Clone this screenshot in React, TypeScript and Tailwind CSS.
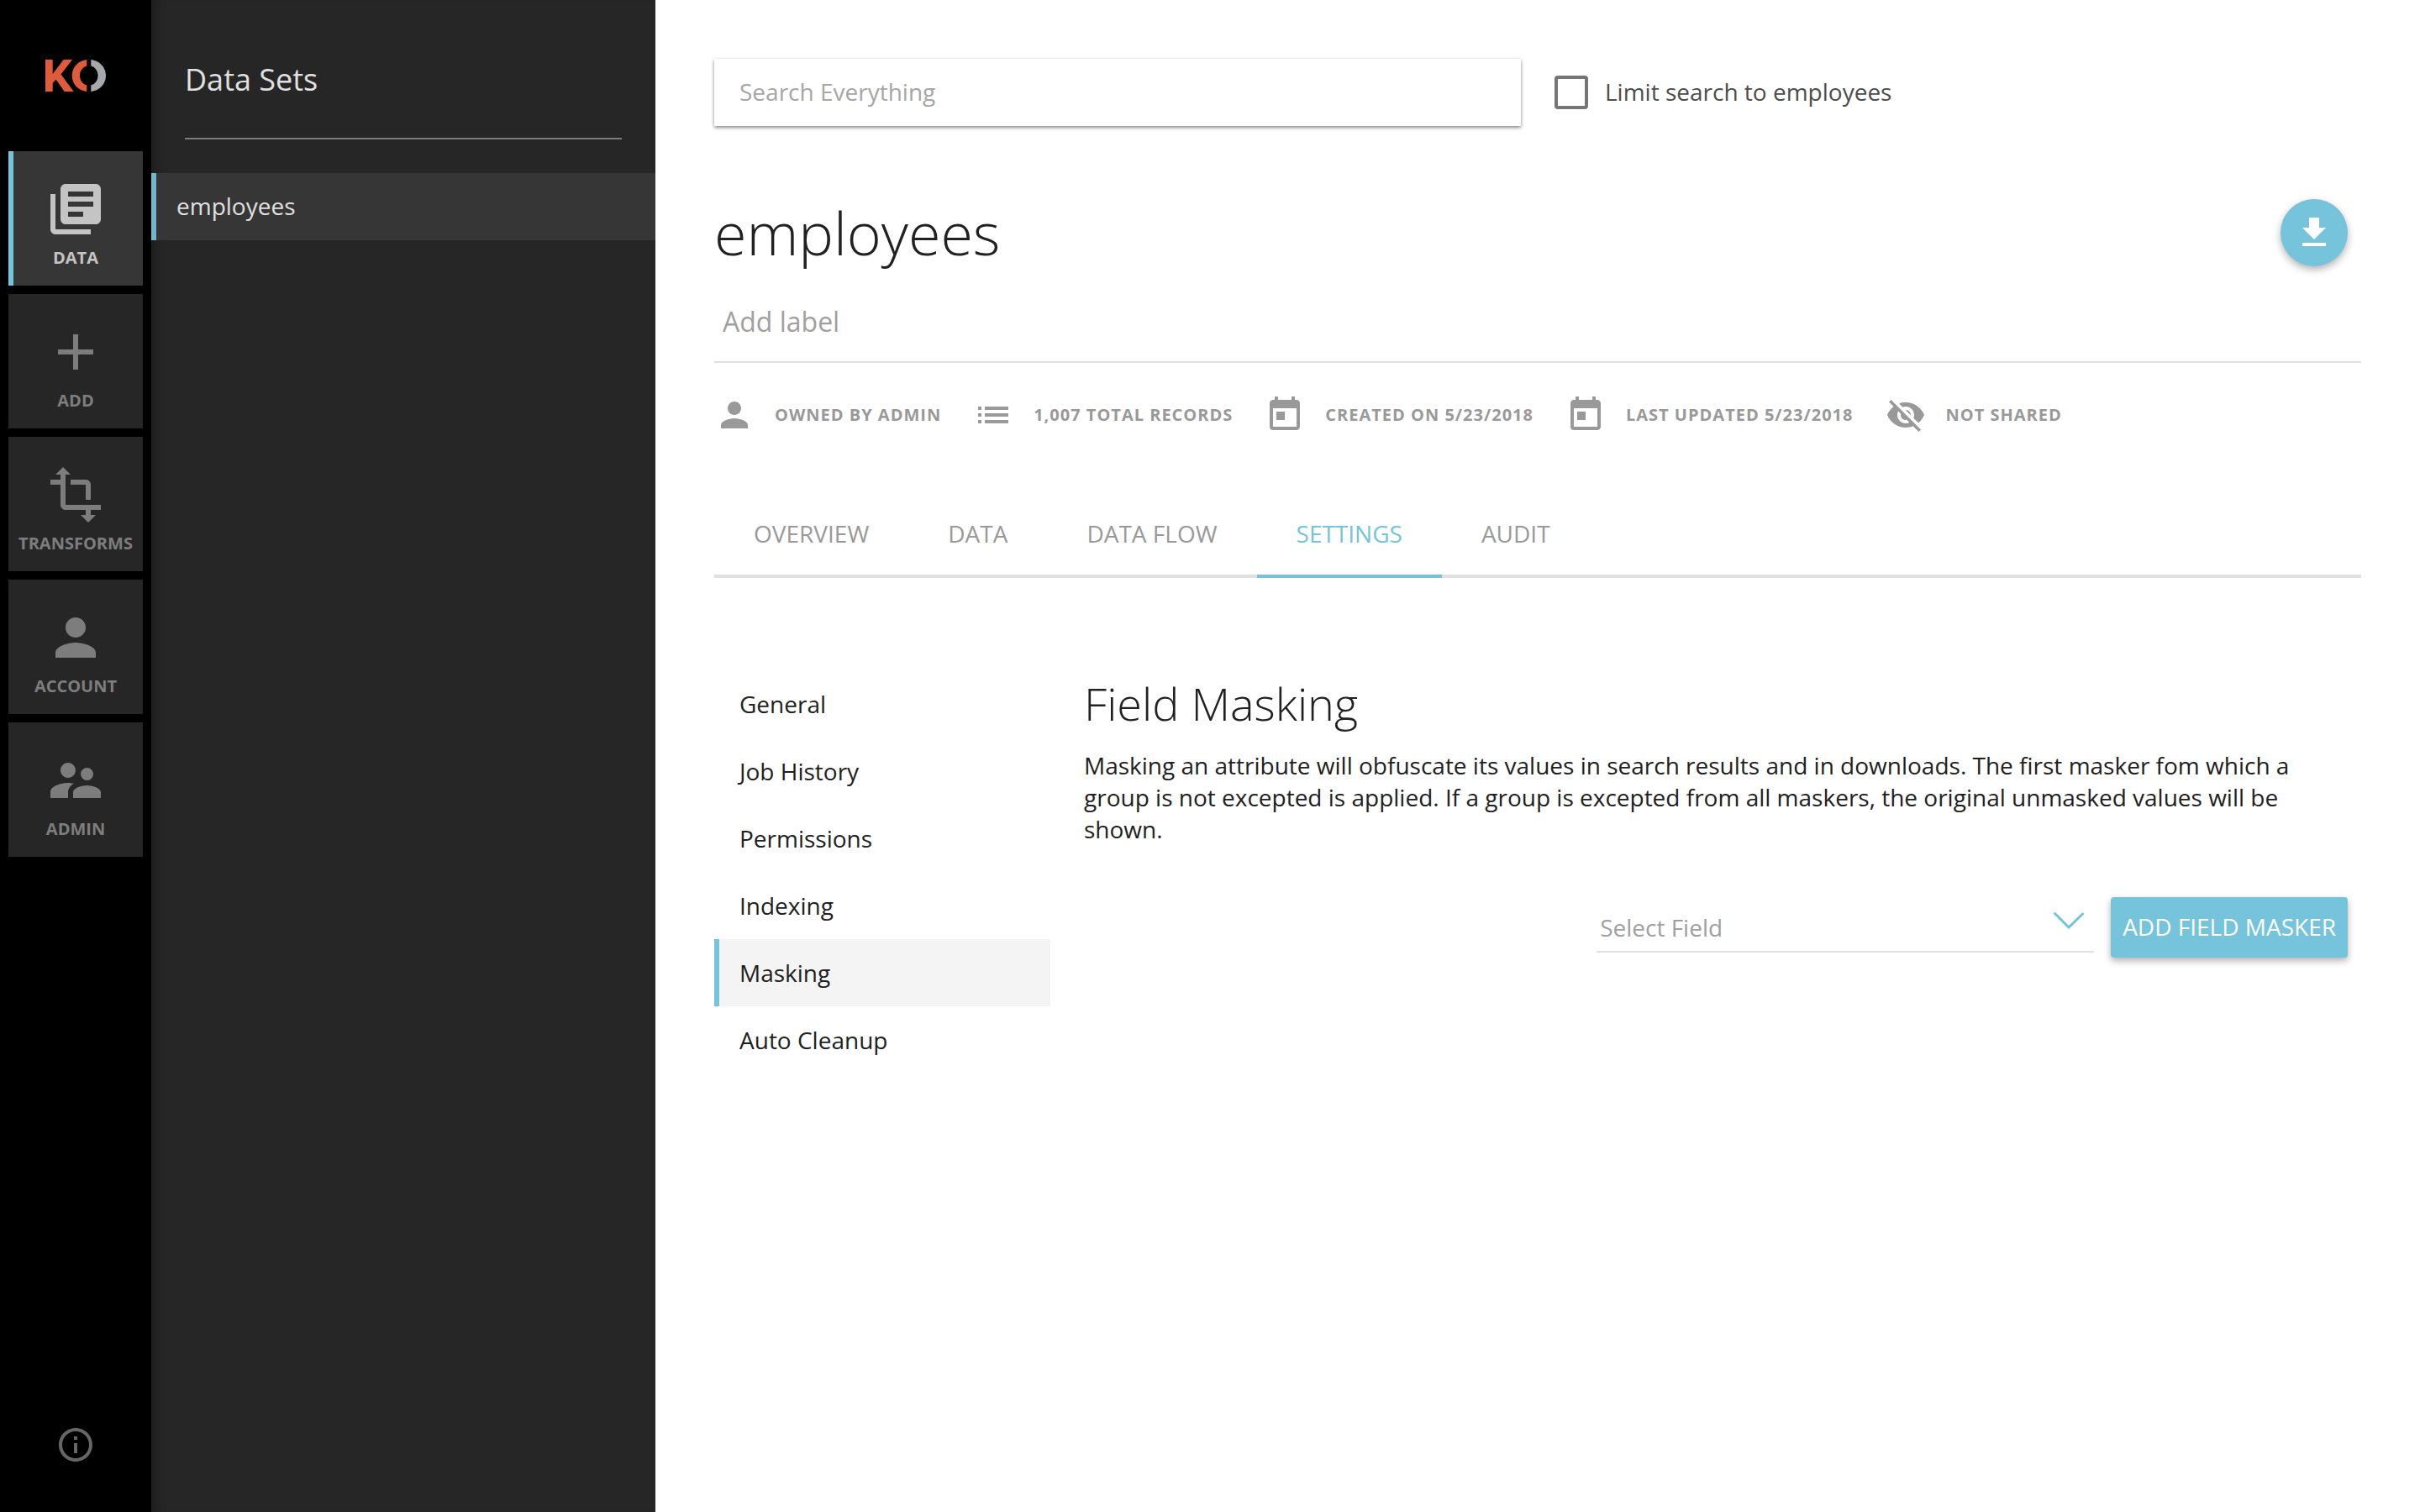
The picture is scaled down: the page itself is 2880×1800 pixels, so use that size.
import type { ReactNode } from "react";
import {
  MdLibraryBooks,
  MdAdd,
  MdTransform,
  MdPerson,
  MdSupervisorAccount,
  MdInfoOutline,
  MdList,
  MdToday,
  MdVisibilityOff,
  MdFileDownload,
} from "react-icons/md";

function Logo() {
  return (
    <svg viewBox="0 0 72 38" className="h-[38px] w-[72px]" role="img" aria-label="KO">
      <path fill="#e05b3b" d="M0 0h8.700v17L21.700 0H32L18.500 17.500L33.700 38H22.700L12.500 23.500L8.700 28v10H0z" />
      <path fill="#e05b3b" d="M49.300 0v7.500C44.500 8.800 41 13.500 41 19s3.500 10.200 8.300 11.500V38C39.300 37 31.700 29 31.700 19S39.300 1 49.300 0z" />
      <path fill="#a7a8ab" d="M54.300 0v7.500C59.100 8.800 62.600 13.500 62.600 19s-3.500 10.200-8.300 11.500V38C64.300 37 72 29 72 19S64.300 1 54.300 0z" />
    </svg>
  );
}

const navItems = [
  { label: "DATA", icon: MdLibraryBooks, active: true },
  { label: "ADD", icon: MdAdd, active: false },
  { label: "TRANSFORMS", icon: MdTransform, active: false },
  { label: "ACCOUNT", icon: MdPerson, active: false },
  { label: "ADMIN", icon: MdSupervisorAccount, active: false },
];

function NavRail() {
  return (
    <nav aria-label="Main" className="flex w-[180px] shrink-0 flex-col bg-black px-2.5">
      <a href="#home" className="flex h-[180px] items-center justify-center">
        <Logo />
      </a>
      <div className="flex flex-col gap-2.5">
        {navItems.map(({ label, icon: Icon, active }) => (
          <a
            key={label}
            href={"#" + label.toLowerCase()}
            className={
              active
                ? "flex h-40 flex-col items-center justify-center gap-2 bg-[#363636] pt-3.5 text-[#c4c4c4] shadow-[inset_6px_0_0_#76c3dc]"
                : "flex h-40 flex-col items-center justify-center gap-2 bg-[#262626] pt-3.5 text-[#7d7d7d]"
            }
          >
            <Icon className="size-[72px]" />
            <span className="text-[20px] leading-7 font-bold">{label}</span>
          </a>
        ))}
      </div>
      <button aria-label="About" className="mt-auto mb-14 self-center text-[#666]">
        <MdInfoOutline className="size-12" />
      </button>
    </nav>
  );
}

function DataSets() {
  return (
    <aside className="w-[600px] shrink-0 bg-[#262626] text-[#e0e0e0] shadow-[inset_16px_0_16px_-12px_rgba(0,0,0,0.3)]">
      <div className="px-10 pt-[70px]">
        <h2 className="border-b-2 border-[#7d7d7d] pb-11 text-[36px] leading-[50px]">Data Sets</h2>
      </div>
      <a
        href="#employees"
        className="mt-10 flex h-20 items-center border-l-[6px] border-[#70b6cc] bg-[#363636] pb-0.5 pl-6 text-[28px]"
      >
        employees
      </a>
    </aside>
  );
}

function Meta({ icon, children }: { icon: ReactNode; children: ReactNode }) {
  return (
    <li className="flex items-center gap-6">
      {icon}
      {children}
    </li>
  );
}

const tabs = ["OVERVIEW", "DATA", "DATA FLOW", "SETTINGS", "AUDIT"];
const sections = ["General", "Job History", "Permissions", "Indexing", "Masking", "Auto Cleanup"];

export default function App() {
  return (
    <div className="flex min-h-screen bg-white font-['Open_Sans',sans-serif] text-[#212121]">
      <NavRail />
      <DataSets />
      <main className="min-w-0 flex-1 px-[70px] pt-[70px]">
        <div className="flex items-center gap-10">
          <input
            type="search"
            aria-label="Search Everything"
            placeholder="Search Everything"
            className="h-20 w-[960px] bg-white px-[30px] pb-0.5 text-[28px] shadow-[0_2px_4px_rgba(0,0,0,0.45),0_0_4px_rgba(0,0,0,0.06)] placeholder:text-[#a6a6a6]"
          />
          <label className="flex items-center gap-5 text-[28px] text-[#4d4d4d]">
            <input type="checkbox" className="size-10 appearance-none rounded-sm border-4 border-[#757575]" />
            <span className="pb-0.5">Limit search to employees</span>
          </label>
        </div>

        <header className="mt-[78px] border-b-2 border-[#e0e0e0] pb-[22px]">
          <div className="flex items-center justify-between pr-4">
            <h1 className="text-[70px] leading-[98px] font-light">employees</h1>
            <button
              aria-label="Download"
              className="flex size-20 items-center justify-center rounded-full bg-[#76c3dc] text-white shadow-[0_4px_10px_rgba(0,0,0,0.3)]"
            >
              <MdFileDownload className="size-12" />
            </button>
          </div>
          <input
            aria-label="Add label"
            placeholder="Add label"
            className="mt-[30px] block h-[52px] w-full px-2.5 text-[32px] placeholder:text-[#a0a0a0]"
          />
        </header>

        <ul className="mt-[38px] flex gap-[38px] text-[20px] font-bold tracking-wider text-[#999]">
          <Meta icon={<MdPerson className="size-12" />}>OWNED BY ADMIN</Meta>
          <Meta icon={<MdList className="size-12" />}>1,007 TOTAL RECORDS</Meta>
          <Meta icon={<MdToday className="size-12" />}>CREATED ON 5/23/2018</Meta>
          <Meta icon={<MdToday className="size-12" />}>LAST UPDATED 5/23/2018</Meta>
          <Meta icon={<MdVisibilityOff className="size-12" />}>NOT SHARED</Meta>
        </ul>

        <div role="tablist" className="mt-20 flex text-[28px] leading-[74px] shadow-[inset_0_-4px_0_#e0e0e0]">
          {tabs.map((tab) => (
            <button
              key={tab}
              role="tab"
              aria-selected={tab === "SETTINGS"}
              className={
                tab === "SETTINGS"
                  ? "border-b-4 border-[#76c3dc] px-[47px] pb-3 text-[#76c3dc]"
                  : "border-b-4 border-transparent px-[47px] pb-3 text-[#999]"
              }
            >
              {tab}
            </button>
          ))}
        </div>

        <div className="mt-[110px] flex gap-10 text-[28px]">
          <nav aria-label="Settings" className="flex w-[400px] shrink-0 flex-col">
            {sections.map((section) => (
              <a
                key={section}
                href={"#" + section}
                className={
                  section === "Masking"
                    ? "flex h-20 items-center border-l-[6px] border-[#76c3dc] bg-[#f4f4f4] pl-6"
                    : "flex h-20 items-center border-l-[6px] border-transparent pl-6"
                }
              >
                {section}
              </a>
            ))}
          </nav>
          <section className="min-w-0 flex-1 pr-4">
            <h2 className="text-[54px] leading-[78px] font-light">Field Masking</h2>
            <p className="mt-4 leading-[38px]">
              Masking an attribute will obfuscate its values in search results and in downloads. The first masker fom
              which a group is not excepted is applied. If a group is excepted from all maskers, the original unmasked
              values will be shown.
            </p>
            <div className="mt-[62px] flex justify-end gap-5">
              <div className="relative h-[66px] w-[592px]">
                <select
                  aria-label="Select Field"
                  className="h-full w-full appearance-none border-b-2 border-[#e0e0e0] px-1 pt-2 text-[#a0a0a0]"
                >
                  <option>Select Field</option>
                </select>
                <svg
                  viewBox="0 0 36 20"
                  className="pointer-events-none absolute top-[18px] right-3 h-5 w-9 fill-none stroke-[#76c3dc] stroke-3"
                >
                  <path strokeLinecap="round" d="M1.500 1.500L18 18L34.500 2" />
                </svg>
              </div>
              <button className="h-[72px] rounded-sm bg-[#76c3dc] px-3.5 pb-0.5 text-white shadow-[0_4px_8px_rgba(0,0,0,0.3)]">
                ADD FIELD MASKER
              </button>
            </div>
          </section>
        </div>
      </main>
    </div>
  );
}
